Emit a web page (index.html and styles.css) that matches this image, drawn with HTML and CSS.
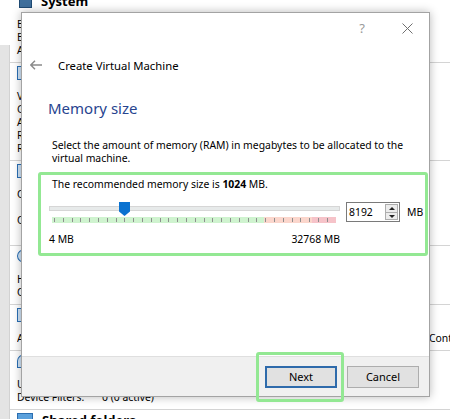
FILE: index.html
```html
<!DOCTYPE html>
<html lang="en">
<head>
    <meta charset="UTF-8">
    <title>Create Virtual Machine</title>
    <link rel="stylesheet" href="styles.css">
</head>
<body>
    <div class="desktop">
        <div class="vm-list"></div>

        <!-- Detalles de la VM (fondo) -->
        <div class="details">
            <section class="sec">
                <div class="sec-head"><span class="ico ico-system"></span>System</div>
                <div class="row">Base Memory:&nbsp;&nbsp;&nbsp;&nbsp;&nbsp;1024 MB</div>
                <div class="row">Boot Order:&nbsp;&nbsp;&nbsp;&nbsp;&nbsp;&nbsp;&nbsp;Floppy, Optical, Hard Disk</div>
                <div class="row">Acceleration:&nbsp;&nbsp;&nbsp;&nbsp;VT-x/AMD-V, Nested Paging</div>
            </section>
            <section class="sec">
                <div class="sec-head"><span class="ico"></span>Display</div>
                <div class="row">Video Memory:&nbsp;&nbsp;&nbsp;&nbsp;16 MB</div>
                <div class="row">Graphics Controller:&nbsp;&nbsp;VBoxVGA</div>
                <div class="row">Acceleration:&nbsp;&nbsp;&nbsp;&nbsp;3D</div>
                <div class="row">Remote Desktop Server:&nbsp;&nbsp;Disabled</div>
                <div class="row">Recording:&nbsp;&nbsp;&nbsp;&nbsp;Disabled</div>
            </section>
            <section class="sec">
                <div class="sec-head"><span class="ico"></span>Storage</div>
                <div class="row">Controller: IDE</div>
                <div class="row sub">IDE Secondary Device 0:&nbsp;&nbsp;[Optical Drive] Empty</div>
                <div class="row">Controller: SATA</div>
                <div class="row sub">SATA Port 0:&nbsp;&nbsp;&nbsp;&nbsp;Ubuntu.vdi (Normal, 10.00 GB)</div>
            </section>
            <section class="sec">
                <div class="sec-head"><span class="ico ico-audio"></span>Audio</div>
                <div class="row">Host Driver:&nbsp;&nbsp;&nbsp;&nbsp;Windows DirectSound</div>
                <div class="row">Controller:&nbsp;&nbsp;&nbsp;&nbsp;&nbsp;ICH AC97</div>
            </section>
            <section class="sec">
                <div class="sec-head"><span class="ico"></span>Network</div>
                <div class="row row-wide"><span class="clip">Adapter 1:&nbsp;&nbsp;&nbsp;&nbsp;Intel PRO/1000 MT Desktop (Bridged Adapter)</span><span>Controller)</span></div>
            </section>
            <section class="sec">
                <div class="sec-head"><span class="ico ico-usb"></span>USB</div>
                <div class="row">USB Controller:&nbsp;&nbsp;OHCI</div>
                <div class="row"><span class="lbl">Device Filters:</span>0 (0 active)</div>
            </section>
            <section class="sec">
                <div class="sec-head"><span class="ico ico-folder"></span>Shared folders</div>
            </section>
        </div>
    </div>

    <!-- Asistente -->
    <div class="dialog">
        <div class="titlebar">
            <span class="tb-btn tb-help">?</span>
            <span class="tb-btn">
                <svg width="11" height="11" viewBox="0 0 11 11"><path d="M0.5 0.5 L10.5 10.5 M10.5 0.5 L0.5 10.5" stroke="#6f6f6f" stroke-width="1" fill="none"/></svg>
            </span>
        </div>

        <div class="wizard-head">
            <svg class="back" width="12" height="10" viewBox="0 0 12 10"><path d="M12 5 H1 M5 0.7 L0.8 5 L5 9.3" stroke="#8a8a8a" stroke-width="1.4" fill="none"/></svg>
            <span>Create Virtual Machine</span>
        </div>

        <h1 class="page-title">Memory size</h1>
        <p class="page-text">Select the amount of memory (RAM) in megabytes to be allocated to the virtual machine.</p>

        <div class="group">
            <div class="recommend">The recommended memory size is <b>1024</b> MB.</div>
            <div class="slider-row">
                <div class="slider">
                    <div class="groove"></div>
                    <div class="thumb"></div>
                    <div class="ticks"></div>
                </div>
                <div class="spin">
                    <span class="spin-value">8192</span>
                    <span class="spin-btns">
                        <span class="spin-up"></span>
                        <span class="spin-down"></span>
                    </span>
                </div>
                <span class="unit">MB</span>
            </div>
            <div class="scale">
                <span>4 MB</span>
                <span>32768 MB</span>
            </div>
        </div>

        <div class="footer">
            <button class="btn btn-default">Next</button>
            <button class="btn">Cancel</button>
        </div>
    </div>

    <div class="mark-next"></div>
</body>
</html>
```

FILE: styles.css
```css
body {
    margin: 0;
    width: 450px;
    height: 419px;
    overflow: hidden;
    position: relative;
    background-color: #fff;
    font-family: 'Noto Sans', 'Open Sans', sans-serif;
    font-size: 10.4px;
    color: #000;
}

/* Fondo: ventana de VirtualBox */
.desktop {
    display: flex;
    height: 100%;
}
.vm-list {
    width: 9px;
    margin-top: 45px;
    background-color: #e4e4e4;
    border-right: 1px solid #d2d2d2;
    flex-shrink: 0;
}
.details {
    flex: 1;
    margin-top: -9px;
    white-space: nowrap;
    overflow: hidden;
}
.sec {
    border-bottom: 1px solid #d4d4d4;
    padding-bottom: 5px;
}
.sec-head {
    display: flex;
    align-items: center;
    gap: 9px;
    height: 20px;
    margin-bottom: 7px;
    padding-left: 7px;
    font-weight: bold;
    font-size: 13px;
}
.ico {
    width: 16px;
    height: 14px;
    border: 1px solid #2a6fb5;
    background-color: #cfe3f6;
    box-sizing: border-box;
}
.ico-system {
    margin-left: 2px;
    width: 13px;
    background-color: #3f6f9c;
    border-color: #1f4a73;
}
.ico-audio {
    border-radius: 50% 0 0 50%;
}
.ico-usb {
    border-radius: 50% 50% 0 0;
}
.ico-folder {
    background-color: #5aa0dc;
    border-color: #2b6eb0;
}
.row {
    height: 13px;
    line-height: 13px;
    padding-left: 7px;
}
.row.sub {
    padding-left: 30px;
}
.row-wide {
    display: grid;
    grid-template-columns: 412px auto;
}
.clip {
    overflow: hidden;
}
.lbl {
    display: inline-block;
    width: 85px;
}

/* Diálogo */
.dialog {
    position: absolute;
    left: 21px;
    top: 12px;
    width: 409px;
    height: 385px;
    box-sizing: border-box;
    border: 1px solid #a3a3a3;
    background-color: #fff;
    box-shadow: 0 0 9px rgba(0, 0, 0, 0.28);
    display: flex;
    flex-direction: column;
}
.titlebar {
    display: flex;
    justify-content: flex-end;
    align-items: center;
    gap: 15px;
    height: 30px;
    padding-right: 7px;
}
.tb-btn {
    width: 30px;
    display: flex;
    justify-content: center;
    align-items: center;
}
.tb-help {
    color: #9a9a9a;
    font-size: 13px;
}
.wizard-head {
    display: flex;
    align-items: center;
    gap: 16px;
    height: 24px;
    margin-top: 10px;
    padding-left: 8px;
    font-size: 11.3px;
}
.page-title {
    margin: 21px 0 0 26px;
    font-size: 15px;
    font-weight: normal;
    line-height: 20px;
    color: #27448f;
}
.page-text {
    margin: 21px 16px 0 30px;
    line-height: 13px;
}
.group {
    margin: 7px 0 0 16px;
    width: 390px;
    height: 84px;
    box-sizing: border-box;
    border: 3px solid #93e893;
    border-radius: 3px;
    padding-left: 8px;
}
.recommend {
    line-height: 14px;
    padding: 2px 0 0 3px;
}
.slider-row {
    display: flex;
    align-items: flex-start;
    margin-top: 8px;
}
.slider {
    position: relative;
    width: 291px;
    height: 26px;
}
.groove {
    position: absolute;
    left: 0;
    right: 0;
    top: 7px;
    height: 3px;
    background-color: #e7eaea;
    border: 1px solid #d6d6d6;
    box-sizing: content-box;
}
.thumb {
    position: absolute;
    left: 70px;
    top: 3px;
    width: 11px;
    height: 14px;
    background-color: #0a72d0;
    clip-path: polygon(0 0, 100% 0, 100% 68%, 50% 100%, 0 68%);
}
.ticks {
    position: absolute;
    left: 3px;
    right: 4px;
    top: 18px;
    height: 6px;
    background:
        repeating-linear-gradient(90deg, #8e8e8e 0 1px, transparent 1px 8.8px) 2px 1px / 100% 4px no-repeat,
        linear-gradient(90deg, #cff3cf 0 212px, #fbd6cc 212px 260px, #f6c3c9 260px);
}
.spin {
    display: flex;
    align-items: center;
    justify-content: space-between;
    width: 54px;
    height: 20px;
    margin: 3px 0 0 6px;
    box-sizing: border-box;
    border: 1px solid #7a7a7a;
    padding: 0 1px 0 2px;
}
.spin-btns {
    display: flex;
    flex-direction: column;
    width: 13px;
    height: 16px;
    border: 1px solid #adadad;
    box-sizing: border-box;
}
.spin-up, .spin-down {
    flex: 1;
    background-color: #ececec;
    position: relative;
}
.spin-up {
    border-bottom: 1px solid #adadad;
}
.spin-up::after, .spin-down::after {
    content: "";
    position: absolute;
    left: 3px;
    border-left: 3px solid transparent;
    border-right: 3px solid transparent;
}
.spin-up::after {
    top: 2px;
    border-bottom: 3px solid #222;
}
.spin-down::after {
    top: 2px;
    border-top: 3px solid #222;
}
.unit {
    margin: 3px 0 0 7px;
    line-height: 20px;
}
.scale {
    display: flex;
    justify-content: space-between;
    width: 291px;
    margin-top: 7px;
    line-height: 14px;
}
.footer {
    margin-top: auto;
    height: 40px;
    box-sizing: border-box;
    border-top: 1px solid #dfdfdf;
    background-color: #f0f0f0;
    display: flex;
    justify-content: flex-end;
    align-items: center;
    gap: 10px;
    padding-right: 10px;
}
.btn {
    width: 72px;
    height: 22px;
    font-family: inherit;
    font-size: 11px;
    color: #000;
    background-color: #e1e1e1;
    border: 1px solid #adadad;
    padding: 0;
}
.btn-default {
    border: 2px solid #2f6bab;
}

/* Marca verde sobre el botón Next */
.mark-next {
    position: absolute;
    left: 256px;
    top: 352px;
    width: 88px;
    height: 50px;
    box-sizing: border-box;
    border: 3px solid #93e893;
    border-radius: 3px;
}
```
